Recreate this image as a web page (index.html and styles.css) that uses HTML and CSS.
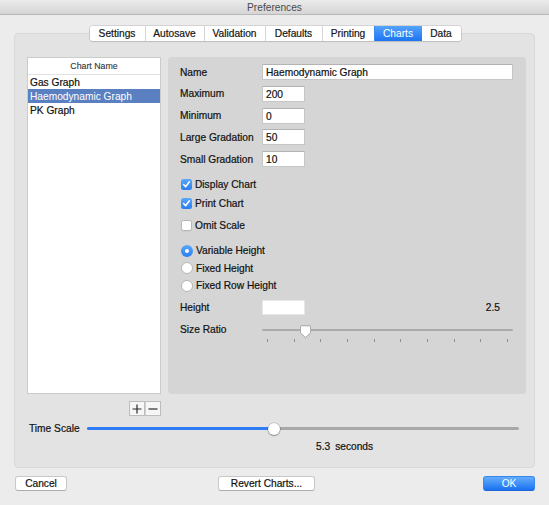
FILE: index.html
```html
<!DOCTYPE html>
<html>
<head>
<meta charset="utf-8">
<title>Preferences</title>
<link rel="stylesheet" href="styles.css">
</head>
<body>
<div class="titlebar">Preferences</div>
<div class="tabs-wrap">
  <div class="tabs">
    <span class="tab t-settings">Settings</span>
    <span class="tab t-autosave">Autosave</span>
    <span class="tab t-validation">Validation</span>
    <span class="tab t-defaults">Defaults</span>
    <span class="tab t-printing">Printing</span>
    <span class="tab t-charts active">Charts</span>
    <span class="tab t-data after-active">Data</span>
  </div>
</div>
<div class="group">
  <div class="main">
    <div class="list">
      <div class="list-head">Chart Name</div>
      <div class="row">Gas Graph</div>
      <div class="row sel">Haemodynamic Graph</div>
      <div class="row">PK Graph</div>
    </div>
    <div class="panel">
      <div class="form">
        <span class="lbl">Name</span><div class="input wide">Haemodynamic Graph</div>
        <span class="lbl">Maximum</span><div class="input narrow">200</div>
        <span class="lbl">Minimum</span><div class="input narrow">0</div>
        <span class="lbl">Large Gradation</span><div class="input narrow">50</div>
        <span class="lbl">Small Gradation</span><div class="input narrow">10</div>
      </div>
      <div class="opt o1"><span class="cb on"><svg width="11" height="11" viewBox="0 0 11 11"><path d="M2.6 5.6 L4.6 7.8 L8.4 2.8" fill="none" stroke="#fff" stroke-width="1.5" stroke-linecap="round" stroke-linejoin="round"/></svg></span>Display Chart</div>
      <div class="opt o2"><span class="cb on"><svg width="11" height="11" viewBox="0 0 11 11"><path d="M2.6 5.6 L4.6 7.8 L8.4 2.8" fill="none" stroke="#fff" stroke-width="1.5" stroke-linecap="round" stroke-linejoin="round"/></svg></span>Print Chart</div>
      <div class="opt o3"><span class="cb off"></span>Omit Scale</div>
      <div class="opt r1"><span class="rb on"></span>Variable Height</div>
      <div class="opt r2"><span class="rb off"></span>Fixed Height</div>
      <div class="opt r3"><span class="rb off"></span>Fixed Row Height</div>
      <div class="hrow">
        <span class="lbl">Height</span>
        <div class="input narrow short"></div>
        <span class="val">2.5</span>
      </div>
      <div class="srow">
        <span class="lbl">Size Ratio</span>
        <div class="slider">
          <div class="track"></div>
          <div class="ticks">
            <i></i><i></i><i></i><i></i><i></i><i></i><i></i><i></i><i></i><i></i>
          </div>
          <svg class="knob" width="13" height="14" viewBox="0 0 13 14"><path d="M1.5 2 Q1.5 0.8 2.7 0.8 H10.3 Q11.5 0.8 11.5 2 V7.8 L6.5 12.6 L1.5 7.8 Z" fill="#fff" stroke="#a0a0a0" stroke-width="0.8"/></svg>
        </div>
      </div>
    </div>
  </div>
  <div class="pm">
    <span class="pmb"><svg width="10" height="10" viewBox="0 0 10 10"><path d="M5 0.5 V9.5 M0.5 5 H9.5" stroke="#2a2a2a" stroke-width="1.2"/></svg></span>
    <span class="pmb"><svg width="10" height="10" viewBox="0 0 10 10"><path d="M0.5 5 H9.5" stroke="#2a2a2a" stroke-width="1.2"/></svg></span>
  </div>
  <div class="timerow">
    <span class="tlabel">Time Scale</span>
    <div class="tslider">
      <div class="tfill" style="width:187px"></div>
      <div class="tknob"></div>
    </div>
  </div>
  <div class="secs"><span>5.3</span><span>seconds</span></div>
</div>
<div class="buttons">
  <div class="btn cancel">Cancel</div>
  <div class="btn revert">Revert Charts...</div>
  <div class="btn ok">OK</div>
</div>
</body>
</html>
```

FILE: styles.css
```css
html, body {
  margin: 0;
  padding: 0;
}
body {
  width: 549px;
  height: 505px;
  overflow: hidden;
  background: #ececec;
  font-family: "Liberation Sans", Arial, sans-serif;
  font-size: 10.2px;
  color: #161616;
  -webkit-text-stroke: 0.2px currentColor;
}

.titlebar {
  height: 14px;
  line-height: 15px;
  border-bottom: 1px solid #b7b7b7;
  background: linear-gradient(#ebebeb, #d5d5d5);
  text-align: center;
  color: #4a4a4a;
  -webkit-text-stroke: 0;
}

.tabs-wrap {
  display: flex;
  justify-content: center;
  margin-top: 11px;
  padding-left: 1px;
  height: 15px;
  position: relative;
  z-index: 1;
}
.tabs {
  display: flex;
  border-radius: 3px;
  box-shadow: 0 0 0 0.6px #b9b9b9, 0 1px 1px rgba(0, 0, 0, 0.15);
  background: #fff;
}
.tab {
  box-sizing: border-box;
  height: 15px;
  line-height: 15px;
  text-align: center;
  background: #fff;
  border-left: 1px solid #d6d6d6;
}
.t-settings { width: 55px; border-left: none; border-radius: 3px 0 0 3px; }
.t-autosave { width: 59px; }
.t-validation { width: 61px; }
.t-defaults { width: 57px; }
.t-printing { width: 52px; }
.t-charts { width: 48px; }
.t-data { width: 39px; border-radius: 0 3px 3px 0; }
.tab.active {
  background: linear-gradient(#54a3fb, #1c74f1);
  color: #fff;
  border-left-color: #3a8af3;
  -webkit-text-stroke: 0;
}
.tab.after-active { border-left: none; }

.group {
  margin: -8px 0 0 14px;
  width: 521px;
  box-sizing: border-box;
  border: 1px solid #d9d9d9;
  border-radius: 4px;
  background: #e3e3e3;
  padding: 23px 8px 14px 12px;
}

.main {
  display: flex;
  gap: 7px;
  height: 337px;
}

.list {
  width: 134px;
  box-sizing: border-box;
  background: #fff;
  border: 1px solid #cbcbcb;
}
.list-head {
  height: 16px;
  line-height: 17px;
  text-align: center;
  font-size: 8.8px;
  color: #333;
  border-bottom: 1px solid #e2e2e2;
  -webkit-text-stroke: 0.1px currentColor;
}
.row {
  height: 14px;
  line-height: 15px;
  padding-left: 2px;
  color: #111;
}
.row.sel {
  background: #5b80c1;
  color: #fff;
  -webkit-text-stroke: 0;
}

.panel {
  flex: 1;
  box-sizing: border-box;
  background: #d5d5d5;
  border-radius: 4px;
  padding: 7px 0 0 12px;
}

.form {
  display: grid;
  grid-template-columns: 82px auto;
  grid-auto-rows: 16px;
  row-gap: 5.75px;
  align-items: center;
}
.lbl {
  color: #111;
  line-height: 17px;
}
.input {
  box-sizing: border-box;
  height: 16px;
  line-height: 15px;
  padding-left: 3px;
  background: #fff;
  border: 1px solid #c6c6c6;
  border-top-color: #b3b3b3;
  color: #111;
}
.input.wide { width: 251px; }
.input.narrow { width: 43px; }
.input.short { height: 15px; border-color: #e6e6e6; }

.opt {
  display: flex;
  align-items: center;
  gap: 3px;
  height: 14px;
  color: #111;
}
.o1 { margin-top: 10px; }
.o2 { margin-top: 5.3px; }
.o3 { margin-top: 8.4px; }
.r1 { margin-top: 11px; }
.r2 { margin-top: 3.6px; }
.r3 { margin-top: 3.4px; }

.cb {
  width: 11px;
  height: 11px;
  margin-left: 1px;
  box-sizing: border-box;
  border-radius: 2.5px;
  display: flex;
}
.cb.on {
  background: linear-gradient(#5aa7fc, #2a7ef2);
}
.cb.off {
  background: #fff;
  border: 1px solid #b6b6b6;
  box-shadow: 0 0.5px 0.5px rgba(0, 0, 0, 0.08);
}
.rb {
  width: 12px;
  height: 12px;
  margin-left: 1px;
  box-sizing: border-box;
  border-radius: 50%;
  display: flex;
  align-items: center;
  justify-content: center;
}
.rb.on {
  background: linear-gradient(#5aa7fc, #2a7ef2);
}
.rb.on::after {
  content: "";
  width: 4px;
  height: 4px;
  border-radius: 50%;
  background: #fff;
}
.rb.off {
  background: #fff;
  border: 1px solid #b6b6b6;
}

.hrow {
  display: flex;
  align-items: center;
  height: 15px;
  margin-top: 7.3px;
}
.hrow .lbl { width: 82px; }
.hrow .val {
  margin-left: auto;
  margin-right: 26px;
  color: #111;
}

.srow {
  display: flex;
  align-items: flex-start;
  margin-top: 7px;
  height: 22px;
}
.srow .lbl {
  width: 82px;
  line-height: 15px;
}
.slider {
  position: relative;
  width: 251px;
  height: 22px;
}
.track {
  margin-top: 7px;
  height: 2.5px;
  border-radius: 2px;
  background: #ababab;
}
.ticks {
  display: flex;
  justify-content: space-between;
  padding: 0 5px;
  margin-top: 7.5px;
}
.ticks i {
  display: block;
  width: 1px;
  height: 3px;
  background: #8e8e8e;
}
.knob {
  position: absolute;
  left: 37px;
  top: 3px;
  filter: drop-shadow(0 0.5px 0.5px rgba(0, 0, 0, 0.2));
}

.pm {
  display: flex;
  justify-content: flex-end;
  width: 134px;
  margin-top: 7px;
}
.pmb {
  box-sizing: border-box;
  width: 16px;
  height: 15px;
  display: flex;
  align-items: center;
  justify-content: center;
  background: #f6f6f6;
  border: 1px solid #bdbdbd;
}
.pmb + .pmb {
  border-left: 1px solid #d0d0d0;
}

.timerow {
  display: flex;
  align-items: center;
  height: 13px;
  margin-top: 6px;
}
.tlabel {
  margin-left: 2px;
  width: 58px;
  color: #111;
}
.tslider {
  position: relative;
  width: 432px;
  height: 3px;
  border-radius: 2px;
  background: #a9a9a9;
}
.tfill {
  height: 3px;
  border-radius: 2px;
  background: #2f7df6;
}
.tknob {
  position: absolute;
  left: 181px;
  top: -4.5px;
  width: 12px;
  height: 12px;
  border-radius: 50%;
  background: #fff;
  box-shadow: 0 0 0 0.5px rgba(0, 0, 0, 0.25), 0 1px 1.5px rgba(0, 0, 0, 0.3);
}

.secs {
  display: flex;
  gap: 5px;
  height: 12px;
  line-height: 12px;
  margin: 6px 0 0 289px;
  color: #111;
}

.buttons {
  display: flex;
  margin-top: 8px;
  padding: 0 14px 0 15px;
}
.btn {
  box-sizing: border-box;
  height: 15px;
  line-height: 14px;
  text-align: center;
  background: #fff;
  border: 1px solid #c8c8c8;
  border-bottom-color: #adadad;
  border-radius: 3px;
  color: #111;
}
.cancel { width: 52px; }
.revert { width: 97px; margin-left: 151px; }
.ok {
  width: 52px;
  margin-left: auto;
  background: linear-gradient(#64adfc, #1b72f0);
  border-color: #3a86ef;
  border-bottom-color: #1c66d6;
  color: #fff;
  -webkit-text-stroke: 0;
}
```
